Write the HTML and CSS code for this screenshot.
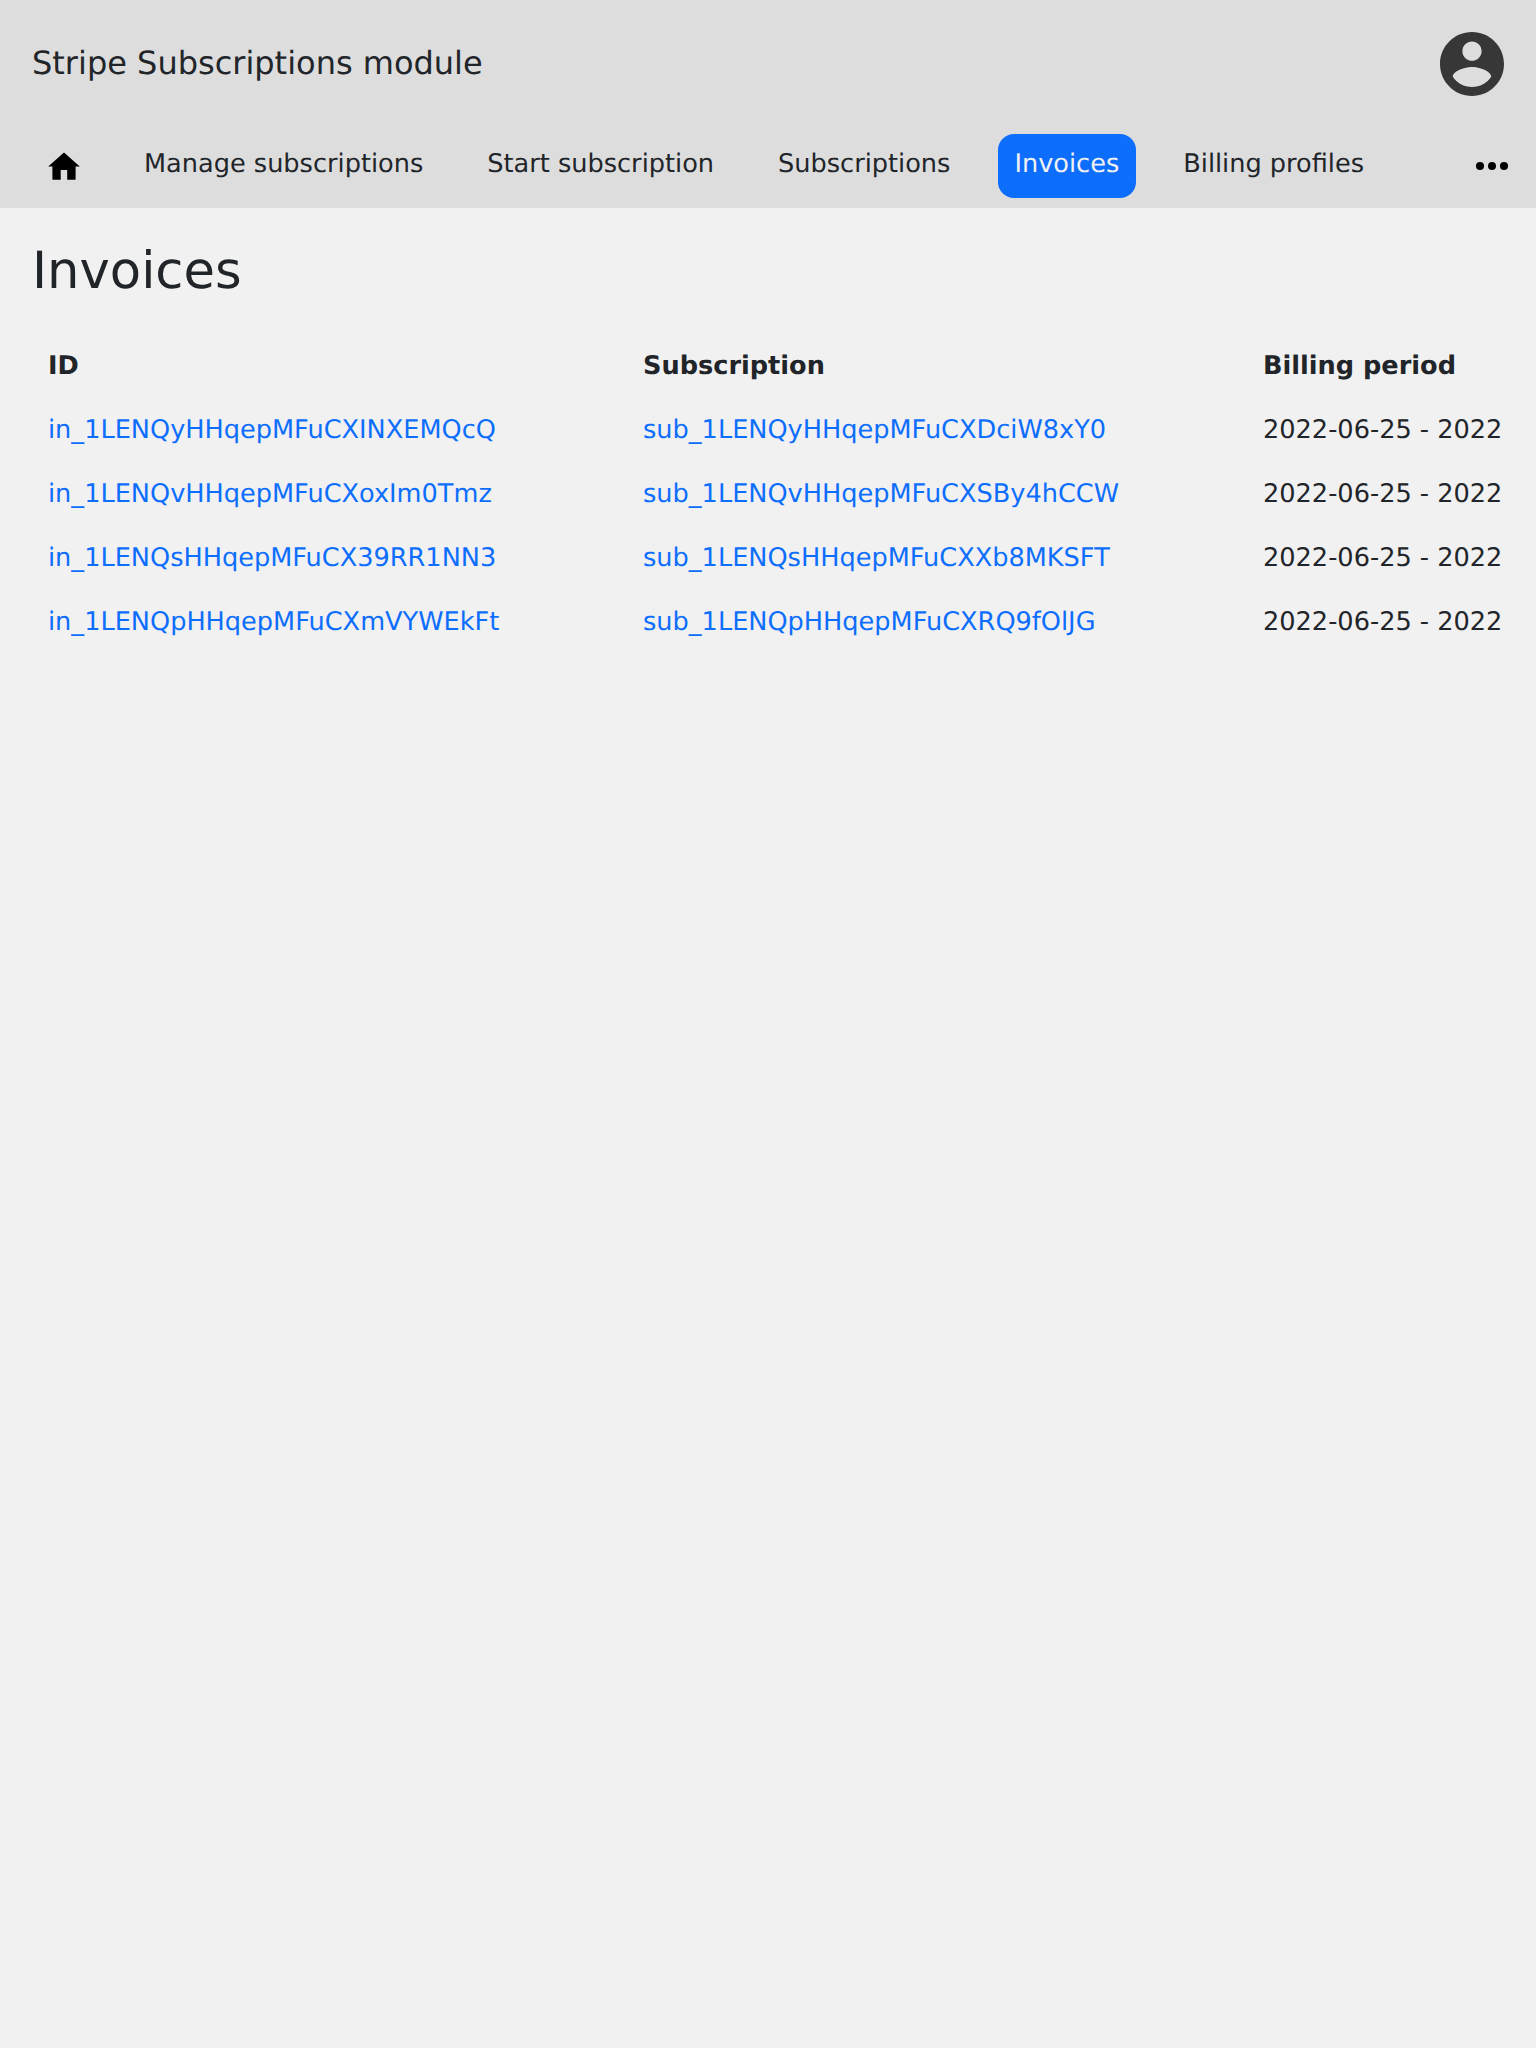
FILE: index.html
```html
<!DOCTYPE html>
<html lang="en">
<head>
<meta charset="utf-8">
<title>Stripe Subscriptions module</title>
<link rel="stylesheet" href="styles.css">
</head>
<body>
<header class="header">
  <div class="topbar">
    <div class="brand">Stripe Subscriptions module</div>
    <svg class="avatar" viewBox="2 2 20 20" fill="#373737"><path d="M12 2C6.480 2 2 6.480 2 12s4.480 10 10 10 10-4.480 10-10S17.520 2 12 2zm0 3c1.660 0 3 1.340 3 3s-1.340 3-3 3-3-1.340-3-3 1.340-3 3-3zm0 14.200c-2.500 0-4.710-1.280-6-3.220.030-1.990 4-3.080 6-3.080 1.990 0 5.970 1.090 6 3.080-1.290 1.940-3.500 3.220-6 3.220z"/></svg>
  </div>
  <nav class="nav">
    <a class="item" href="#" aria-label="Home"><svg class="icon" viewBox="0 0 32 32"><path d="M16 2.500 31.800 16.500H27.600V29.700H19.200V20H12.700V29.700H4.400V16.500H.2z"/></svg></a>
    <a class="item" href="#">Manage subscriptions</a>
    <a class="item" href="#">Start subscription</a>
    <a class="item" href="#">Subscriptions</a>
    <a class="item active" href="#">Invoices</a>
    <a class="item" href="#">Billing profiles</a>
    <a class="item more" href="#" aria-label="More"><svg class="icon" viewBox="0 0 32 32"><circle cx="4" cy="16" r="4"/><circle cx="16" cy="16" r="4"/><circle cx="28" cy="16" r="4"/></svg></a>
  </nav>
</header>
<main class="content">
  <h1 class="title">Invoices</h1>
  <table class="table">
    <thead><tr><th class="col-id">ID</th><th class="col-sub">Subscription</th><th>Billing period</th></tr></thead>
    <tbody>
      <tr><td><a href="#">in_1LENQyHHqepMFuCXINXEMQcQ</a></td><td><a href="#">sub_1LENQyHHqepMFuCXDciW8xY0</a></td><td>2022-06-25 - 2022</td></tr>
      <tr><td><a href="#">in_1LENQvHHqepMFuCXoxIm0Tmz</a></td><td><a href="#">sub_1LENQvHHqepMFuCXSBy4hCCW</a></td><td>2022-06-25 - 2022</td></tr>
      <tr><td><a href="#">in_1LENQsHHqepMFuCX39RR1NN3</a></td><td><a href="#">sub_1LENQsHHqepMFuCXXb8MKSFT</a></td><td>2022-06-25 - 2022</td></tr>
      <tr><td><a href="#">in_1LENQpHHqepMFuCXmVYWEkFt</a></td><td><a href="#">sub_1LENQpHHqepMFuCXRQ9fOlJG</a></td><td>2022-06-25 - 2022</td></tr>
    </tbody>
  </table>
</main>
</body>
</html>
```
FILE: styles.css
```css
* { box-sizing: border-box; }
body {
  margin: 0;
  min-height: 100vh;
  background: #f1f1f1;
  color: #212529;
  font: 25.6px/38.4px "DejaVu Sans", sans-serif;
  text-rendering: geometricPrecision;
}
a { color: #0d6efd; text-decoration: none; }
.header { height: 208px; background: #ddd; }
.topbar {
  display: flex;
  align-items: center;
  justify-content: space-between;
  height: 128px;
  padding: 0 32px;
}
.brand { font-size: 32px; line-height: 48px; padding-bottom: 2px; }
.avatar { width: 64px; height: 64px; }
.nav { display: flex; gap: 32px; padding: 6px 12px 0 32px; }
.item {
  height: 64px;
  padding: 11px 16px 0;
  border-radius: 16px;
  color: #212529;
  white-space: nowrap;
}
.active { margin-right: -1px; padding-right: 17px; background: #0d6efd; color: #f1f1f1; }
.more { margin-left: auto; }
.icon { display: block; width: 32px; height: 32px; margin-top: 5px; fill: #000; }
.content { padding: 33px 32px 0; }
.title { margin: 0 0 32px; font-size: 51.2px; line-height: 61.4px; font-weight: 400; }
.table { width: 1472px; table-layout: fixed; border-collapse: collapse; }
.table th, .table td {
  height: 64px;
  padding: 12.8px 0 12.8px 16px;
  text-align: left;
  white-space: nowrap;
}
.col-id { width: 595px; }
.col-sub { width: 620px; }
```
